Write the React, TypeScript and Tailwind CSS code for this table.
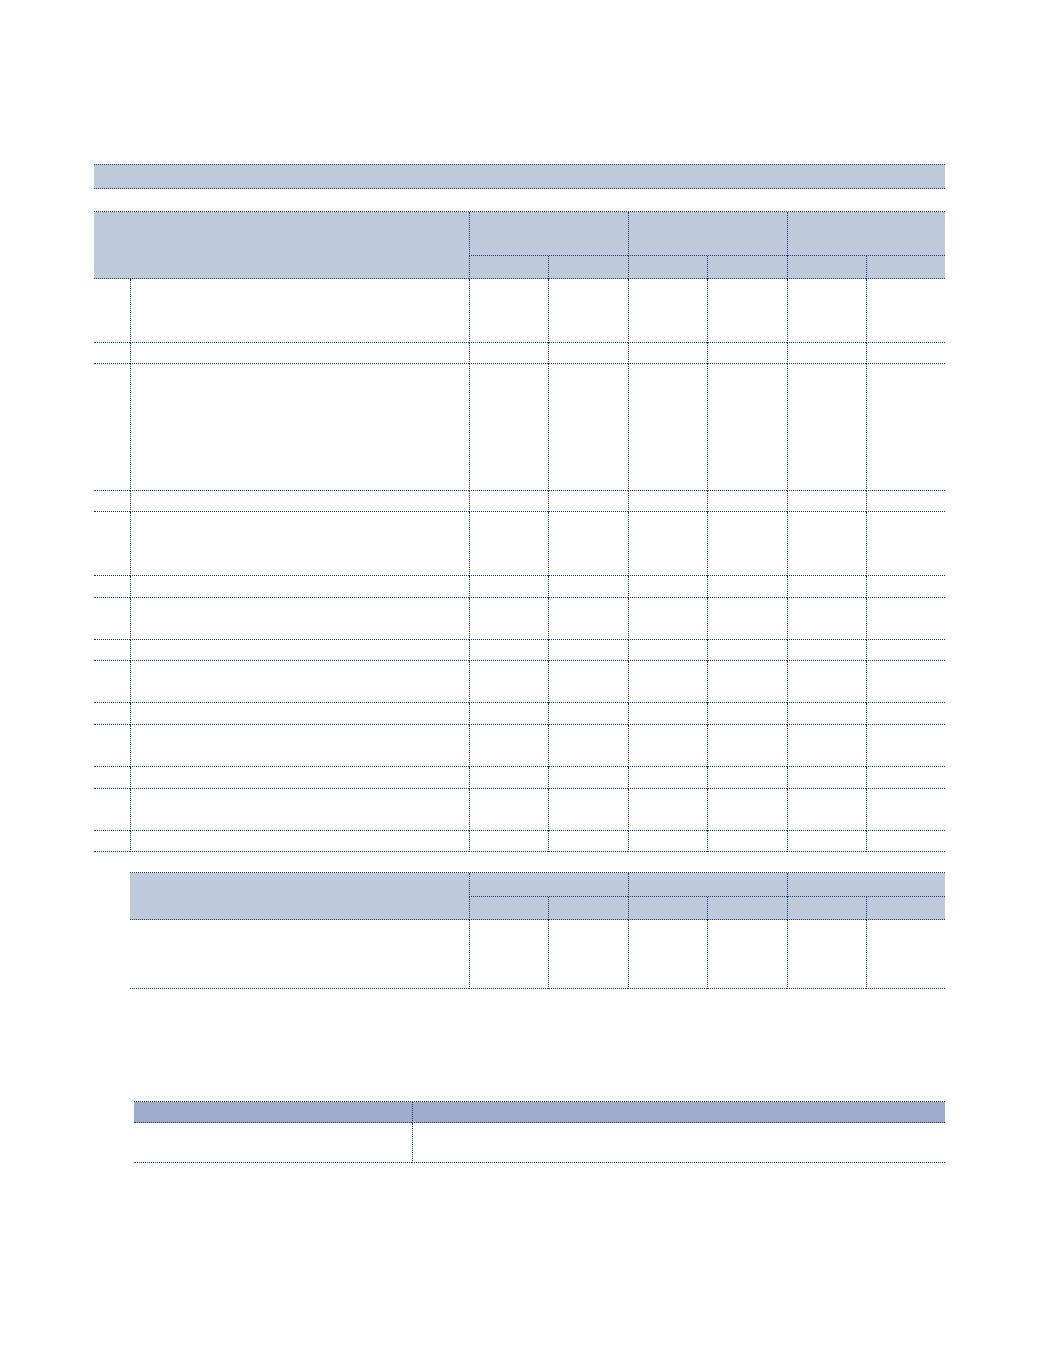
const line = "border-dotted border-[#143d6b]";

// heights of the body rows in the first table
const bodyRows = [64, 21, 127, 21, 64, 22, 42, 21, 42, 22, 42, 22, 42, 21];
const subCols = [0, 1, 2, 3, 4, 5];

function ValueHeader({ top, bottom }: { top: number; bottom: number }) {
	return (
		<div className="grid grid-cols-[79px_80px_79px_80px_79px_79px] bg-[#bfc9dc]">
			{[0, 1, 2].map((g) => (
				<div key={g} className={`col-span-2 border-l border-b ${line}`} style={{ height: top }} />
			))}
			{subCols.map((i) => (
				<div key={i} className={`border-l border-b ${line}`} style={{ height: bottom }} />
			))}
		</div>
	);
}

function ValueCells({ height }: { height: number }) {
	return (
		<>
			{subCols.map((i) => (
				<div key={i} className={`border-l border-b ${line}`} style={{ height }} />
			))}
		</>
	);
}

function FirstTable() {
	return (
		<div className={`mt-[22px] border-t ${line}`}>
			<div className="flex">
				<div className={`w-[375px] bg-[#bfc9dc] border-b ${line}`} />
				<ValueHeader top={44} bottom={23} />
			</div>
			{bodyRows.map((h, r) => (
				<div key={r} className="grid grid-cols-[36px_339px_79px_80px_79px_80px_79px_79px]">
					<div className={`border-b ${line}`} style={{ height: h }} />
					<div className={`border-l border-b ${line}`} style={{ height: h }} />
					<ValueCells height={h} />
				</div>
			))}
		</div>
	);
}

function SecondTable() {
	return (
		<div className={`ml-[36px] mt-[20px] border-t ${line}`}>
			<div className="flex">
				<div className={`w-[339px] bg-[#bfc9dc] border-b ${line}`} />
				<ValueHeader top={24} bottom={23} />
			</div>
			<div className="grid grid-cols-[339px_79px_80px_79px_80px_79px_79px]">
				<div className={`h-[69px] border-b ${line}`} />
				<ValueCells height={69} />
			</div>
		</div>
	);
}

function ThirdTable() {
	return (
		<div className={`ml-[40px] mt-[112px] grid grid-cols-[278px_533px] border-t ${line}`}>
			<div className={`h-[21px] bg-[#9fadcb] border-b ${line}`} />
			<div className={`h-[21px] bg-[#9fadcb] border-l border-b ${line}`} />
			<div className={`h-[40px] border-b ${line}`} />
			<div className={`h-[40px] border-l border-b ${line}`} />
		</div>
	);
}

export default function App() {
	return (
		<div className="w-[1039px] min-h-[1353px] bg-white pt-[164px] pl-[94px] font-['Liberation_Sans',sans-serif]">
			<div className="w-[851px]">
				{/* Title band */}
				<div className={`h-[25px] bg-[#bfc9dc] border-y ${line}`} />

				<FirstTable />
				<SecondTable />
				<ThirdTable />
			</div>
		</div>
	);
}
